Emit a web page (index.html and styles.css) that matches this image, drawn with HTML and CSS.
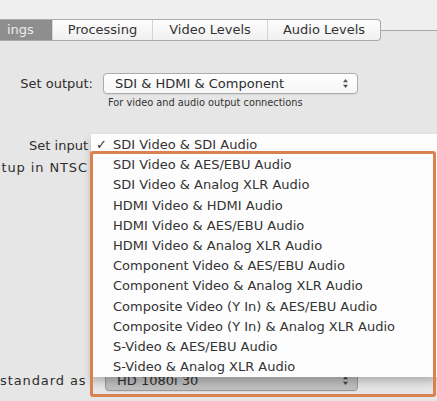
FILE: index.html
```html
<!DOCTYPE html>
<html>
<head>
<meta charset="utf-8">
<link rel="stylesheet" href="styles.css">
</head>
<body>
<div class="screen">
  <div class="tabbar">
    <div class="tabs">
      <div class="tab sel w1">ings</div>
      <div class="tab w2">Processing</div>
      <div class="tab w3">Video Levels</div>
      <div class="tab w4">Audio Levels</div>
    </div>
    <div class="tabline"></div>
  </div>
  <div class="form">
    <div class="row r-output">
      <span class="label">Set output:</span>
      <div class="select">
        <span class="value">SDI &amp; HDMI &amp; Component</span>
        <svg class="stepper" width="7" height="11" viewBox="0 0 7 11"><path d="M3.5 1 L6 4.2 H1 Z M3.5 10 L6 6.8 H1 Z" fill="#555"/></svg>
      </div>
    </div>
    <div class="hint">For video and audio output connections</div>
    <div class="row r-input"><span class="label short">Set input</span></div>
    <div class="row r-ntsc"><span class="label short wide">tup in NTSC</span></div>
    <div class="row r-std">
      <span class="label short wide">standard as</span>
      <div class="select dim">
        <span class="value">HD 1080i 30</span>
        <svg class="stepper" width="7" height="11" viewBox="0 0 7 11"><path d="M3.5 1 L6 4.2 H1 Z M3.5 10 L6 6.8 H1 Z" fill="#444"/></svg>
      </div>
    </div>
  </div>
  <ul class="menu">
    <li class="checked"><span class="check">✓</span>SDI Video &amp; SDI Audio</li>
    <li>SDI Video &amp; AES/EBU Audio</li>
    <li>SDI Video &amp; Analog XLR Audio</li>
    <li>HDMI Video &amp; HDMI Audio</li>
    <li>HDMI Video &amp; AES/EBU Audio</li>
    <li>HDMI Video &amp; Analog XLR Audio</li>
    <li>Component Video &amp; AES/EBU Audio</li>
    <li>Component Video &amp; Analog XLR Audio</li>
    <li>Composite Video (Y In) &amp; AES/EBU Audio</li>
    <li>Composite Video (Y In) &amp; Analog XLR Audio</li>
    <li>S-Video &amp; AES/EBU Audio</li>
    <li>S-Video &amp; Analog XLR Audio</li>
  </ul>
  <div class="highlight"></div>
</div>
</body>
</html>
```

FILE: styles.css
```css
html, body {
  margin: 0;
  padding: 0;
}
body {
  background: #e5e5e5;
  font-family: "DejaVu Sans", "Liberation Sans", sans-serif;
  color: #2e2e2e;
}
.screen {
  position: relative;
  width: 437px;
  height: 401px;
  overflow: hidden;
  background: linear-gradient(#efefef 0, #efefef 30px, #e6e6e6 30px, #e6e6e6 100%);
}
.tabbar {
  display: flex;
  align-items: flex-start;
  padding-top: 19px;
}
.tabs {
  display: flex;
  height: 22px;
  box-sizing: border-box;
  border: 1px solid #ababab;
  border-left: none;
  border-radius: 0 4px 4px 0;
  background: linear-gradient(#fdfdfd, #f0f0f0);
  overflow: hidden;
}
.tab {
  font-size: 13px;
  line-height: 20px;
  text-align: center;
  color: #333;
  border-left: 1px solid #d4d4d4;
  box-sizing: border-box;
}
.tab.sel {
  background: #8e8e8e;
  color: #ececec;
  border-left: none;
  text-align: left;
  padding-left: 7px;
}
.w1 { width: 52px; }
.w2 { width: 100px; }
.w3 { width: 115px; }
.w4 { width: 113px; }
.tabline {
  flex: 1;
  margin-top: 11px;
  border-top: 1px solid #a9a9a9;
}
.form {
  padding-top: 32px;
}
.row {
  display: flex;
  align-items: center;
  gap: 10px;
}
.label {
  flex: none;
  width: 93px;
  text-align: right;
  font-size: 13px;
  color: #2e2e2e;
  white-space: nowrap;
}
.label.short {
  box-sizing: border-box;
  padding-right: 5px;
  overflow: hidden;
}
.label.wide {
  letter-spacing: 0.9px;
}
.r-output { height: 21px; }
.select {
  width: 255px;
  height: 21px;
  box-sizing: border-box;
  border: 1px solid #acacac;
  border-radius: 4px;
  background: linear-gradient(#ffffff, #f6f6f6);
  display: flex;
  align-items: center;
  justify-content: space-between;
  padding: 0 8px 0 11px;
  font-size: 13px;
  color: #2e2e2e;
  box-shadow: 0 1px 0 rgba(0,0,0,0.06);
}
.hint {
  margin-top: 2px;
  padding-left: 108px;
  font-size: 9.8px;
  line-height: 14px;
  color: #333;
}
.r-input {
  margin-top: 25px;
  height: 20px;
}
.r-ntsc {
  margin-top: 2px;
  height: 20px;
}
.r-std {
  margin-top: 193px;
  height: 21px;
  gap: 12px;
}
.r-std .label.short { padding-right: 7px; }
.select.dim {
  width: 253px;
  background: #bfbfbf;
  border-color: #9a9a9a;
}
.menu {
  position: absolute;
  left: 91px;
  top: 134px;
  right: 0;
  height: 243px;
  box-sizing: border-box;
  margin: 0;
  padding: 1px 0 0 0;
  list-style: none;
  background: #fdfdfd;
  box-shadow: 0 5px 8px rgba(0,0,0,0.22);
}
.menu li {
  position: relative;
  padding-left: 22px;
  font-size: 13px;
  line-height: 20.2px;
  color: #333;
  white-space: nowrap;
}
.check {
  position: absolute;
  left: 5px;
  top: 0;
}
.highlight {
  position: absolute;
  left: 90px;
  top: 151px;
  width: 346px;
  height: 246px;
  box-sizing: border-box;
  border: 3px solid #d9814f;
  border-radius: 3px;
}
```
